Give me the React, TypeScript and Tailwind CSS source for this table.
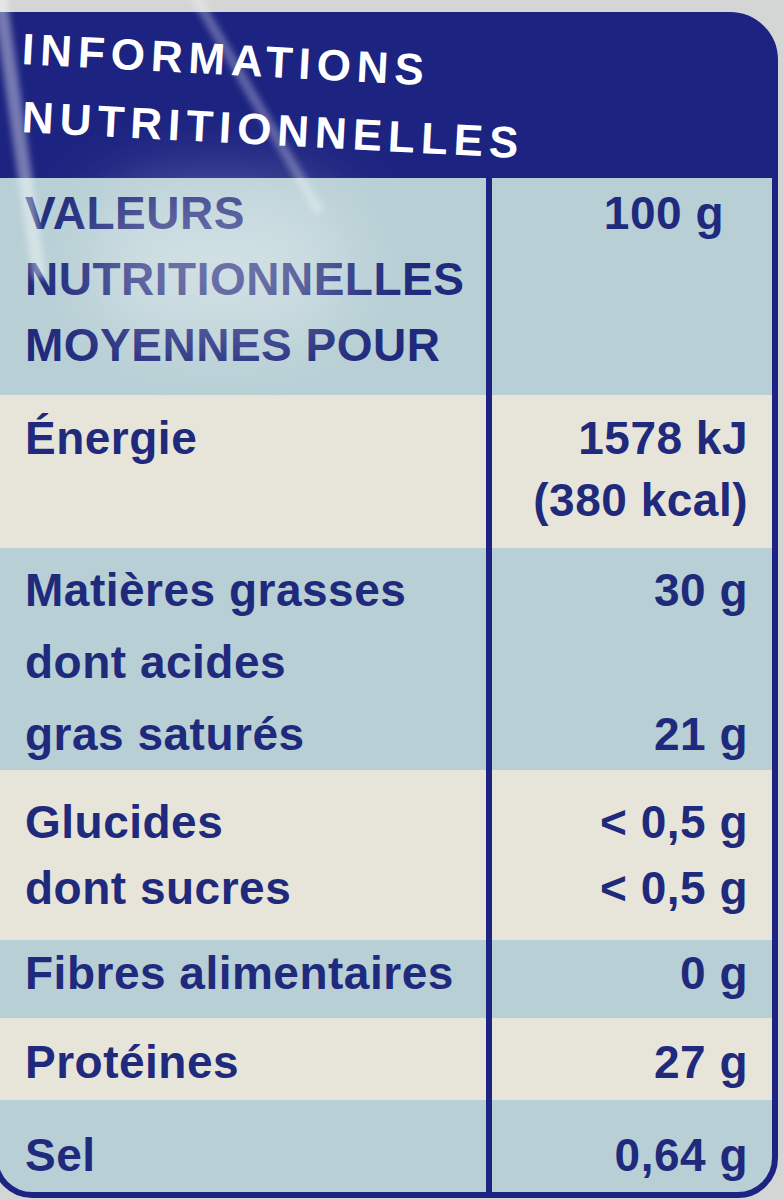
const blue = "bg-[#b7cfd5]";
const cream = "bg-[#e7e5da]";

type Row = {
  bg: string;
  pad: string;
  lead: string;
  lines: [string, string][];
};

const rows: Row[] = [
  {
    bg: blue,
    pad: "pt-[2px] pb-[17px]",
    lead: "leading-[66px]",
    lines: [
      ["VALEURS", "100 g"],
      ["NUTRITIONNELLES", ""],
      ["MOYENNES POUR", ""],
    ],
  },
  {
    bg: cream,
    pad: "pt-[12px] pb-[17px]",
    lead: "leading-[62px]",
    lines: [
      ["Énergie", "1578 kJ"],
      ["", "(380 kcal)"],
    ],
  },
  {
    bg: blue,
    pad: "pt-[6px] pb-0",
    lead: "leading-[72px]",
    lines: [
      ["Matières grasses", "30 g"],
      ["dont acides", ""],
      ["gras saturés", "21 g"],
    ],
  },
  {
    bg: cream,
    pad: "pt-[19px] pb-[19px]",
    lead: "leading-[66px]",
    lines: [
      ["Glucides", "< 0,5 g"],
      ["dont sucres", "< 0,5 g"],
    ],
  },
  {
    bg: blue,
    pad: "pt-0 pb-[12px]",
    lead: "leading-[66px]",
    lines: [["Fibres alimentaires", "0 g"]],
  },
  {
    bg: cream,
    pad: "pt-[11px] pb-[5px]",
    lead: "leading-[66px]",
    lines: [["Protéines", "27 g"]],
  },
  {
    bg: blue,
    pad: "pt-[22px] pb-0",
    lead: "leading-[66px]",
    lines: [["Sel", "0,64 g"]],
  },
];

const NutritionRow = ({ row, first }: { row: Row; first: boolean }) => (
  <div className={`grid grid-cols-[494px_1fr] ${row.bg} ${row.lead}`}>
    <div className={`border-r-[6px] border-[#1c2380] pl-[27px] ${row.pad}`}>
      {row.lines.map(([label], i) => (
        <div key={i} className="h-[1lh] whitespace-nowrap">
          {label}
        </div>
      ))}
    </div>
    <div className={`text-right ${first ? "pr-[48px]" : "pr-[24px]"} ${row.pad}`}>
      {row.lines.map(([, value], i) => (
        <div key={i} className="h-[1lh] whitespace-nowrap">
          {value}
        </div>
      ))}
    </div>
  </div>
);

export default function App() {
  return (
    <div className="relative h-[1200px] w-[784px] overflow-hidden bg-[#d3d6d4] font-['Liberation_Sans',Arial,sans-serif]">
      <div className="ml-[-8px] mt-[12px] flex h-[1186px] w-[786px] flex-col overflow-hidden rounded-tr-[48px] rounded-br-[40px] rounded-bl-[40px] border-[6px] border-[#1c2380] bg-[#1c2380]">
        {/* title band */}
        <div className="flex h-[160px] shrink-0 flex-col items-start gap-[24px] pl-[24px] pt-[9px] text-[44px] font-bold uppercase leading-[44px] tracking-[6px] text-white">
          <div className="origin-left rotate-[3deg]">Informations</div>
          <div className="origin-left rotate-[3deg]">Nutritionnelles</div>
        </div>

        {/* table */}
        <div className="flex-1 text-[46px] font-bold tracking-[0.5px] text-[#1f2a7c]">
          {rows.map((row, i) => (
            <NutritionRow key={i} row={row} first={i === 0} />
          ))}
          <div className="grid h-full grid-cols-[494px_1fr] bg-[#b7cfd5]">
            <div className="border-r-[6px] border-[#1c2380]" />
            <div />
          </div>
        </div>
      </div>

      {/* glare from the plastic wrap */}
      <div className="pointer-events-none absolute left-[90px] top-[190px] h-[150px] w-[260px] rounded-full bg-white/35 blur-2xl" />
      <div className="pointer-events-none absolute left-[10px] top-[-40px] h-[320px] w-[14px] rotate-[-8deg] bg-white/40 blur-[3px]" />
      <div className="pointer-events-none absolute left-[250px] top-[-30px] h-[260px] w-[10px] rotate-[-30deg] bg-white/30 blur-[3px]" />
    </div>
  );
}
